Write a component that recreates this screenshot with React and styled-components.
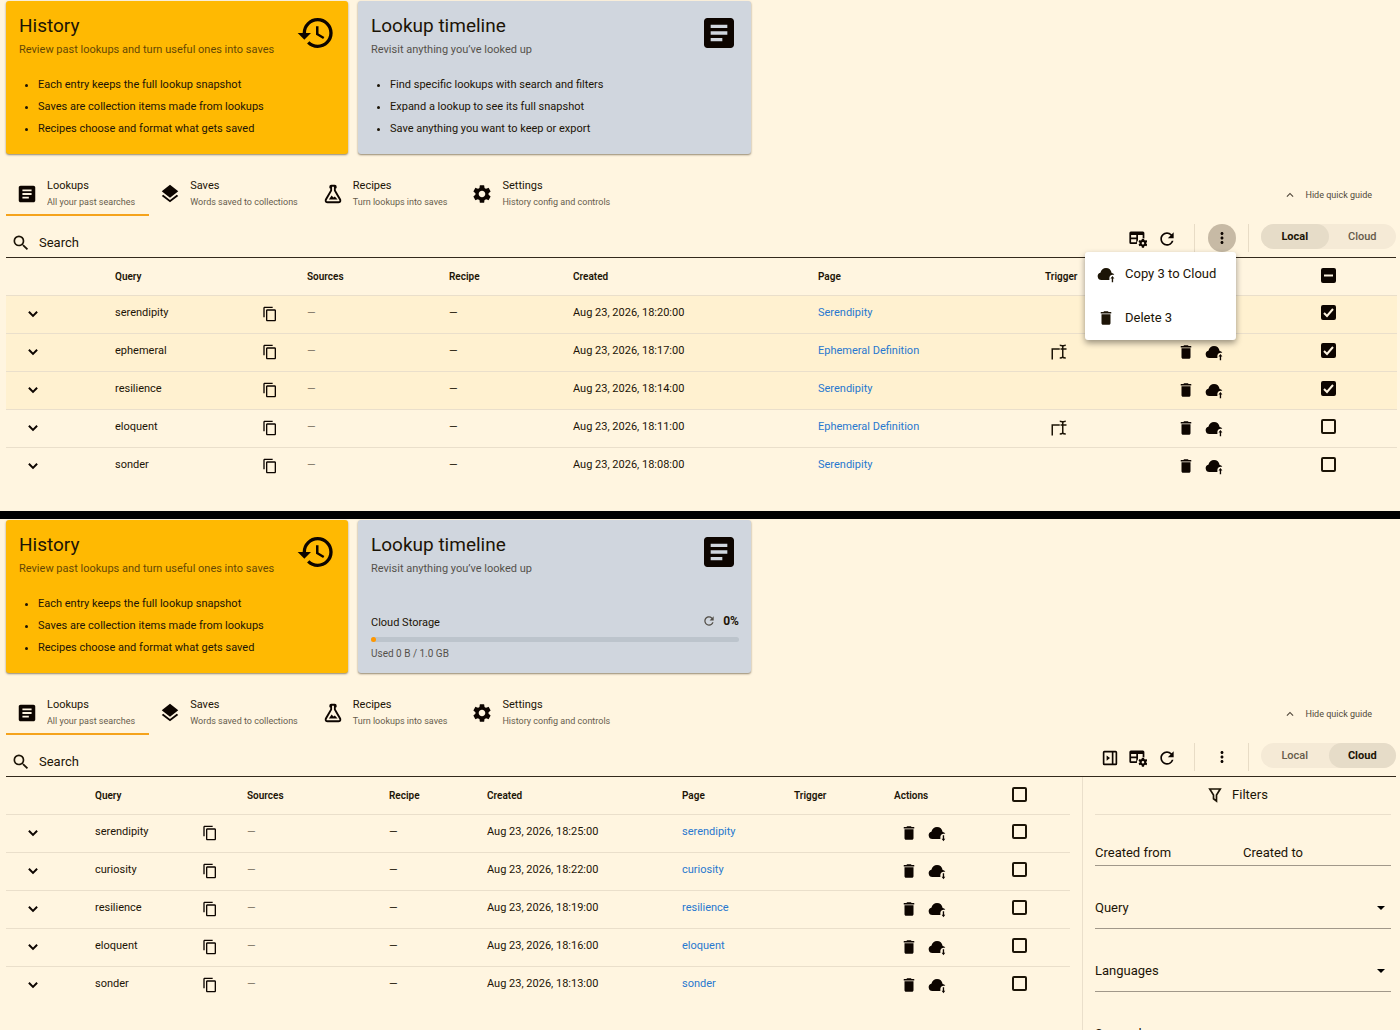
import styled, { createGlobalStyle, css } from "styled-components";
import {
  MdHistory,
  MdArticle,
  MdLayers,
  MdSettings,
  MdSearch,
  MdRefresh,
  MdMoreVert,
  MdExpandLess,
  MdContentCopy,
  MdDelete,
} from "react-icons/md";

const localRows = [
  { query: "serendipity", created: "Aug 23, 2026, 18:20:00", page: "Serendipity", checked: true },
  { query: "ephemeral", created: "Aug 23, 2026, 18:17:00", page: "Ephemeral Definition", trigger: true, checked: true },
  { query: "resilience", created: "Aug 23, 2026, 18:14:00", page: "Serendipity", checked: true },
  { query: "eloquent", created: "Aug 23, 2026, 18:11:00", page: "Ephemeral Definition", trigger: true },
  { query: "sonder", created: "Aug 23, 2026, 18:08:00", page: "Serendipity" },
];

const cloudRows = [
  { query: "serendipity", created: "Aug 23, 2026, 18:25:00", page: "serendipity" },
  { query: "curiosity", created: "Aug 23, 2026, 18:22:00", page: "curiosity" },
  { query: "resilience", created: "Aug 23, 2026, 18:19:00", page: "resilience" },
  { query: "eloquent", created: "Aug 23, 2026, 18:16:00", page: "eloquent" },
  { query: "sonder", created: "Aug 23, 2026, 18:13:00", page: "sonder" },
];

// expand, query, copy, sources, recipe, created, page, trigger, actions, select
const localCols = [109, 143, 49, 142, 124, 245, 227, 125, 109, 118];
const cloudCols = [89, 103, 49, 142, 98, 195, 112, 100, 76, 100];

const tabs = [
  { icon: <MdArticle />, title: "Lookups", text: "All your past searches" },
  { icon: <MdLayers />, title: "Saves", text: "Words saved to collections" },
  { icon: <FlaskIcon />, title: "Recipes", text: "Turn lookups into saves" },
  { icon: <MdSettings />, title: "Settings", text: "History config and controls" },
];

function FlaskIcon() {
  return (
    <svg viewBox="0 0 24 24" width="1em" height="1em" fill="currentColor">
      <path d="M6 22a3 3 0 0 1-3-3c0-.6.2-1.200.5-1.700L9 7.800V6a1 1 0 0 1-1-1V4a2 2 0 0 1 2-2h4a2 2 0 0 1 2 2v1a1 1 0 0 1-1 1v1.800l5.500 9.500c.3.500.5 1.100.5 1.700a3 3 0 0 1-3 3H6m-1-3a1 1 0 0 0 1 1h12a1 1 0 0 0 1-1c0-.2-.1-.4-.2-.5L13 8.400V4h-2v4.400L5.200 18.500c-.1.100-.2.300-.2.500m2.500-1 3-4.500 2 2.300 1.500-1.200 3 3.400z" />
    </svg>
  );
}

function ChevronIcon() {
  return (
    <svg viewBox="0 0 24 24" width="1em" height="1em" fill="none" stroke="currentColor" strokeWidth="2.600">
      <path d="M6.500 9l5.500 5.500L17.500 9" />
    </svg>
  );
}

function CloudArrowIcon({ down }) {
  return (
    <svg viewBox="0 0 24 24" width="1em" height="1em" fill="currentColor">
      <path d="M6 20a5 5 0 0 1-1.500-9.800C5.500 6.500 8.500 4 12 4c4 0 7 2.700 7.500 6.500 1.500.2 3 1 3.500 2.700-3-1-6.300.3-6.500 3.800V20z" />
      {down ? (
        <path d="M19.700 15h1.800v4.500H23L20.600 23l-2.400-3.500h1.500z" />
      ) : (
        <path d="M20.600 14.500L23.200 18h-1.700v5h-1.800v-5H18z" />
      )}
    </svg>
  );
}

function TableCogIcon() {
  return (
    <svg viewBox="0 0 24 24" width="1em" height="1em" fill="currentColor">
      <path d="M2.500 2h16A2 2 0 0 1 20.500 4v7.300a7 7 0 0 0-2.300-.5V10H12v3.500a7 7 0 0 0-1.500 5H2.500a2 2 0 0 1-2-2V4a2 2 0 0 1 2-2m.3 8h6.900V6.500H2.800V10m0 6.200h6.900v-4H2.800v4M12 6.500V10h6.200V6.500z" />
      <path
        fillRule="evenodd"
        d="M17.200 11.600h2.800l.4 1.800 1.100.6 1.700-.6 1.300 2.300-1.400 1.200v1.300l1.400 1.200-1.300 2.300-1.700-.6-1.100.6-.4 1.800h-2.800l-.4-1.800-1.100-.6-1.700.6-1.300-2.300 1.400-1.200v-1.300l-1.400-1.200 1.300-2.300 1.700.6 1.100-.6zM18.600 15.900a1.700 1.700 0 1 0 0 3.400 1.700 1.700 0 0 0 0-3.400z"
      />
    </svg>
  );
}

function PanelIcon() {
  return (
    <svg viewBox="0 0 24 24" width="1em" height="1em" fill="none" stroke="currentColor" strokeWidth="2.200">
      <rect x="3.500" y="3.500" width="17" height="17" rx="1" />
      <path d="M15.500 3v18" />
      <path d="M7.500 8.500l4.500 3.500-4.500 3.500z" fill="currentColor" stroke="none" />
    </svg>
  );
}

function SelectionIcon() {
  return (
    <svg viewBox="0 0 24 24" width="1em" height="1em" fill="none" stroke="currentColor" strokeWidth="2">
      <path d="M3 22V8h10" />
      <path d="M13 3c2 0 3.500.5 4 1.500C17.500 3.500 19 3 21 3M17 4v15M13 20c2 0 3.500-.5 4-1.500.5 1 2 1.500 4 1.500M14 8h8" />
    </svg>
  );
}

function FilterIcon() {
  return (
    <svg viewBox="0 0 24 24" width="1em" height="1em" fill="none" stroke="currentColor" strokeWidth="2.200">
      <path d="M5 4h14l-5 8v8l-4-3v-5z" />
    </svg>
  );
}

function Hero({ cloud }) {
  return (
    <Cards>
      <Card $tone="amber">
        <CardHead>
          <div>
            <h2>History</h2>
            <p>Review past lookups and turn useful ones into saves</p>
          </div>
          <MdHistory />
        </CardHead>
        <Points>
          <li>Each entry keeps the full lookup snapshot</li>
          <li>Saves are collection items made from lookups</li>
          <li>Recipes choose and format what gets saved</li>
        </Points>
      </Card>
      <Card $tone="slate">
        <CardHead>
          <div>
            <h2>Lookup timeline</h2>
            <p>Revisit anything you’ve looked up</p>
          </div>
          <MdArticle />
        </CardHead>
        {cloud ? (
          <Storage>
            <StorageRow>
              <span>Cloud Storage</span>
              <StorageValue>
                <MdRefresh />
                <b>0%</b>
              </StorageValue>
            </StorageRow>
            <Track>
              <i />
            </Track>
            <small>Used 0 B / 1.0 GB</small>
          </Storage>
        ) : (
          <Points>
            <li>Find specific lookups with search and filters</li>
            <li>Expand a lookup to see its full snapshot</li>
            <li>Save anything you want to keep or export</li>
          </Points>
        )}
      </Card>
    </Cards>
  );
}

function TabBar() {
  return (
    <Tabs>
      {tabs.map((tab, i) => (
        <Tab key={tab.title} $active={i === 0}>
          {tab.icon}
          <span>
            {tab.title}
            <small>{tab.text}</small>
          </span>
        </Tab>
      ))}
      <GuideButton>
        <MdExpandLess />
        Hide quick guide
      </GuideButton>
    </Tabs>
  );
}

function Toolbar({ cloud }) {
  return (
    <Bar>
      <SearchBox>
        <MdSearch />
        <input type="text" placeholder="Search" aria-label="Search" />
      </SearchBox>
      <Tools>
        {cloud && (
          <IconButton aria-label="Toggle filters">
            <PanelIcon />
          </IconButton>
        )}
        <IconButton aria-label="Table settings">
          <TableCogIcon />
        </IconButton>
        <IconButton aria-label="Refresh" $size={20}>
          <MdRefresh />
        </IconButton>
      </Tools>
      <MoreSlot>
        <MoreButton aria-label="More" $open={!cloud}>
          <MdMoreVert />
        </MoreButton>
        {!cloud && (
          <Menu>
            <MenuItem>
              <CloudArrowIcon />
              Copy 3 to Cloud
            </MenuItem>
            <MenuItem>
              <MdDelete />
              Delete 3
            </MenuItem>
          </Menu>
        )}
      </MoreSlot>
      <Switcher>
        <Segment $active={!cloud}>Local</Segment>
        <Segment $active={cloud}>Cloud</Segment>
      </Switcher>
    </Bar>
  );
}

function Checkbox({ label, checked, mixed }) {
  return (
    <CheckLabel>
      <CheckInput type="checkbox" aria-label={label} defaultChecked={checked || mixed} />
      {checked && (
        <CheckMark viewBox="0 0 15 15">
          <path d="M3 8l3 3 6-7" />
        </CheckMark>
      )}
      {mixed && (
        <CheckMark viewBox="0 0 15 15">
          <path d="M3 7.500h9" />
        </CheckMark>
      )}
    </CheckLabel>
  );
}

function LookupTable({ rows, cols, cloud }) {
  return (
    <Table>
      <colgroup>
        {cols.map((width, i) => (
          <col key={i} style={{ width }} />
        ))}
      </colgroup>
      <thead>
        <tr>
          <th aria-label="Expand" />
          <th>Query</th>
          <th aria-label="Copy" />
          <th>Sources</th>
          <th>Recipe</th>
          <th>Created</th>
          <th>Page</th>
          <th>Trigger</th>
          <th aria-label="Actions">{cloud && "Actions"}</th>
          <CheckHead>
            <Checkbox label="Select all" mixed={!cloud} />
          </CheckHead>
        </tr>
      </thead>
      <tbody>
        {rows.map((row) => (
          <Row key={row.query} $selected={row.checked}>
            <IconCell $indent={18}>
              <IconButton aria-label="Expand">
                <ChevronIcon />
              </IconButton>
            </IconCell>
            <td>{row.query}</td>
            <IconCell $indent={4}>
              <IconButton aria-label="Copy" $size={16}>
                <MdContentCopy />
              </IconButton>
            </IconCell>
            <MutedCell>—</MutedCell>
            <td>—</td>
            <td>{row.created}</td>
            <td>
              <a href="#page">{row.page}</a>
            </td>
            <IconCell $indent={5}>{row.trigger && <SelectionIcon />}</IconCell>
            <IconCell $indent={cloud ? 6 : 7}>
              <Actions>
                <IconButton aria-label="Delete">
                  <MdDelete />
                </IconButton>
                <IconButton aria-label={cloud ? "Copy to local" : "Copy to cloud"}>
                  <CloudArrowIcon down={cloud} />
                </IconButton>
              </Actions>
            </IconCell>
            <CheckCell>
              <Checkbox label={`Select ${row.query}`} checked={row.checked} />
            </CheckCell>
          </Row>
        ))}
      </tbody>
    </Table>
  );
}

function Filters() {
  return (
    <FilterPanel>
      <FilterTitle>
        <FilterIcon />
        Filters
      </FilterTitle>
      <DateRow>
        <input type="text" placeholder="Created from" aria-label="Created from" />
        <input type="text" placeholder="Created to" aria-label="Created to" />
      </DateRow>
      {["Query", "Languages", "Source language"].map((name) => (
        <SelectField key={name}>
          <select aria-label={name} defaultValue="">
            <option value="">{name}</option>
          </select>
          <Caret viewBox="0 0 8 4">
            <path d="M0 0h8L4 4z" />
          </Caret>
        </SelectField>
      ))}
    </FilterPanel>
  );
}

export default function App() {
  return (
    <Page>
      <GlobalStyle />
      <Panel>
        <Hero />
        <TabBar />
        <Toolbar />
        <LookupTable rows={localRows} cols={localCols} />
      </Panel>
      <Divider />
      <Panel>
        <Hero cloud />
        <TabBar />
        <Toolbar cloud />
        <Split>
          <LookupTable rows={cloudRows} cols={cloudCols} cloud />
          <Filters />
        </Split>
      </Panel>
    </Page>
  );
}

const GlobalStyle = createGlobalStyle`
  * {
    box-sizing: border-box;
  }
  body {
    margin: 0;
    background: #fff5e0;
    color: #1c1406;
    font-family: Roboto, "Liberation Sans", sans-serif;
    font-size: 11px;
    line-height: 16px;
  }
  button, input, select {
    font: inherit;
    color: inherit;
    background: none;
    border: 0;
    padding: 0;
    margin: 0;
  }
  svg {
    display: block;
    flex: none;
  }
`;

const Page = styled.main`
  height: 100vh;
  overflow: hidden;
`;

const Panel = styled.section`
  padding: 1px 4px 26px 6px;
`;

const Divider = styled.hr`
  height: 8px;
  margin: 0;
  border: 0;
  background: #000;
`;

const Cards = styled.div`
  display: grid;
  grid-template-columns: 342px 393px;
  gap: 10px;
`;

const Card = styled.article`
  height: 153px;
  padding: 12px 12px 11px 13px;
  border-radius: 3px;
  background: ${({ $tone }) => ($tone === "amber" ? "#ffb902" : "#d0d6de")};
  box-shadow: 0 1px 2px rgba(40, 25, 0, 0.5);
  display: flex;
  flex-direction: column;
`;

const CardHead = styled.header`
  display: flex;
  justify-content: space-between;
  > svg {
    width: 40px;
    height: 40px;
    color: #0d0500;
  }
  h2 {
    margin: 0;
    font-size: 19px;
    font-weight: 400;
    line-height: 26px;
  }
  p {
    margin: 3px 0 0;
    opacity: 0.7;
  }
`;

const Points = styled.ul`
  margin: 16px 0 0;
  padding: 0 0 0 19px;
  line-height: 22px;
`;

const Storage = styled.div`
  margin-top: auto;
  small {
    display: block;
    margin-top: 4px;
    font-size: 10px;
    opacity: 0.7;
  }
`;

const StorageRow = styled.div`
  display: flex;
  justify-content: space-between;
  align-items: flex-start;
  height: 18px;
  > span {
    align-self: flex-end;
  }
`;

const StorageValue = styled.div`
  display: flex;
  align-items: center;
  gap: 7px;
  font-size: 12px;
  svg {
    width: 14px;
    height: 14px;
    opacity: 0.7;
  }
`;

const Track = styled.div`
  height: 5px;
  margin-top: 6px;
  border-radius: 3px;
  background: #bcc4cc;
  i {
    display: block;
    width: 5px;
    height: 5px;
    border-radius: 50%;
    background: #ff9800;
  }
`;

const Tabs = styled.nav`
  display: flex;
  align-items: flex-start;
  margin-top: 16px;
`;

const Tab = styled.button`
  display: flex;
  align-items: center;
  gap: 9px;
  height: 46px;
  padding: 3px 14px 0 10px;
  text-align: left;
  border-bottom: 2px solid ${({ $active }) => ($active ? "#f5a31c" : "transparent")};
  svg {
    width: 22px;
    height: 22px;
    color: #0d0500;
  }
  small {
    display: block;
    font-size: 9px;
    opacity: 0.7;
  }
`;

const GuideButton = styled.button`
  display: flex;
  align-items: center;
  gap: 8px;
  margin: 17px 24px 0 auto;
  font-size: 9px;
  color: #51483a;
  svg {
    width: 14px;
    height: 14px;
  }
`;

const Bar = styled.div`
  display: flex;
  align-items: flex-start;
  height: 42px;
  padding-top: 8px;
  border-bottom: 1px solid #33291b;
`;

const SearchBox = styled.label`
  flex: 1;
  display: flex;
  align-items: center;
  gap: 8px;
  padding: 9px 5px 0;
  svg {
    width: 20px;
    height: 20px;
  }
  input {
    font-size: 13px;
    outline: none;
  }
  input::placeholder {
    color: #1c1406;
    opacity: 1;
  }
`;

const Tools = styled.div`
  display: flex;
  gap: 10px;
  height: 30px;
  align-items: center;
  padding-right: 17px;
`;

const iconSize = css`
  svg {
    width: ${({ $size = 18 }) => $size}px;
    height: ${({ $size = 18 }) => $size}px;
  }
`;

const IconCell = styled.td`
  && {
    padding: 0 0 1px ${({ $indent }) => $indent}px;
  }
  ${iconSize}
`;

const IconButton = styled.button`
  display: block;
  color: #0d0500;
  && {
    ${iconSize}
  }
`;

const MoreSlot = styled.div`
  position: relative;
  width: 55px;
  height: 28px;
  display: flex;
  justify-content: center;
  border: solid #e8dcc6;
  border-width: 0 1px;
`;

const MoreButton = styled(IconButton)`
  width: 28px;
  height: 28px;
  display: grid;
  place-items: center;
  border-radius: 50%;
  background: ${({ $open }) => ($open ? "#c7baa5" : "transparent")};
`;

const Menu = styled.div`
  position: absolute;
  z-index: 2;
  top: 28px;
  right: 12px;
  width: 151px;
  border-radius: 3px;
  background: #fff;
  box-shadow: 0 3px 6px rgba(0, 0, 0, 0.4);
`;

const MenuItem = styled.button`
  display: flex;
  align-items: center;
  gap: 10px;
  width: 100%;
  height: 44px;
  padding: 0 12px;
  font-size: 13px;
  ${iconSize}
`;

const Switcher = styled.div`
  display: flex;
  width: 135px;
  margin-left: 12px;
  border-radius: 13px;
  background: #f5ead6;
`;

const Segment = styled.button`
  flex: 1;
  height: 25px;
  border-radius: 13px;
  font-weight: ${({ $active }) => ($active ? 700 : 500)};
  color: ${({ $active }) => ($active ? "#1c1406" : "#665b4a")};
  background: ${({ $active }) => ($active ? "#e6dcc8" : "transparent")};
`;

const Table = styled.table`
  width: 100%;
  table-layout: fixed;
  border-collapse: collapse;
  th {
    height: 37px;
    padding: 1px 0 0;
    font-size: 10px;
    font-weight: 600;
    text-align: left;
  }
  td {
    height: 38px;
    padding: 0 0 2px;
    border-top: 1px solid #eadfcb;
  }
  a {
    color: #2878cf;
    text-decoration: none;
  }
`;

const Row = styled.tr`
  background: ${({ $selected }) => ($selected ? "#fff1d0" : "transparent")};
`;

const MutedCell = styled.td`
  color: #7d7465;
`;

const Actions = styled.div`
  display: flex;
  gap: 10px;
`;

const CheckHead = styled.th`
  && {
    padding: 0 0 2px;
  }
`;

const CheckCell = styled.td`
  && {
    padding-bottom: 4px;
  }
`;

const CheckLabel = styled.label`
  display: grid;
  width: 15px;
  margin-left: 42px;
  > * {
    grid-area: 1 / 1;
  }
`;

const CheckInput = styled.input`
  appearance: none;
  width: 15px;
  height: 15px;
  border: 2px solid #1c1406;
  border-radius: 2px;
  &:checked {
    border-color: #0d0500;
    background: #0d0500;
  }
`;

const CheckMark = styled.svg`
  width: 15px;
  height: 15px;
  fill: none;
  stroke: #fff5e0;
  stroke-width: 2;
  pointer-events: none;
`;

const Split = styled.div`
  display: grid;
  grid-template-columns: minmax(0, 1fr) 314px;
  align-items: start;
  gap: 12px;
`;

const FilterPanel = styled.aside`
  padding: 0 5px 0 12px;
  border-left: 1px solid #eadfcb;
  font-size: 13px;
`;

const FilterTitle = styled.h3`
  display: flex;
  align-items: center;
  justify-content: center;
  gap: 8px;
  height: 38px;
  margin: 0;
  padding: 0 12px 2px 0;
  font-size: 13px;
  font-weight: 400;
  border-bottom: 1px solid #eadfcb;
  ${iconSize}
`;

const DateRow = styled.div`
  display: grid;
  grid-template-columns: 1fr 1fr;
  height: 51px;
  padding-top: 25px;
  border-bottom: 1px solid #a1988a;
  input {
    min-width: 0;
  }
  input::placeholder {
    color: #1c1406;
    opacity: 1;
  }
`;

const SelectField = styled.div`
  display: flex;
  align-items: center;
  height: 63px;
  padding-top: 22px;
  border-bottom: 1px solid #a1988a;
  select {
    flex: 1;
    appearance: none;
  }
`;

const Caret = styled.svg`
  width: 8px;
  height: 4px;
  margin-right: 6px;
`;
